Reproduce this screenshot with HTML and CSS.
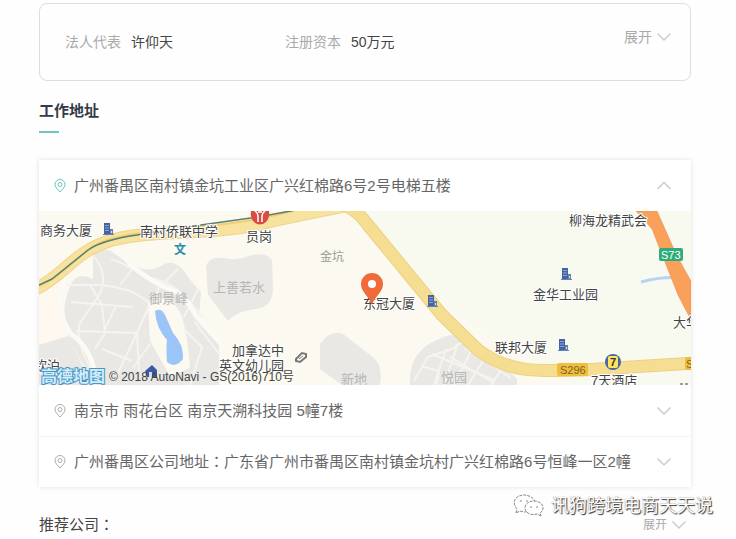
FILE: index.html
```html
<!DOCTYPE html>
<html lang="zh-CN">
<head>
<meta charset="utf-8">
<meta name="viewport" content="width=device-width, initial-scale=1">
<title>工作地址</title>
<link rel="stylesheet" href="styles.css">
</head>
<body>
<svg class="defs" aria-hidden="true">
  <symbol id="down" viewBox="0 0 16 10"><path d="M1.500 1.500 8 8l6.500-6.500" fill="none" stroke="currentColor" stroke-width="1.500"/></symbol>
  <symbol id="up" viewBox="0 0 16 10"><path d="M1.500 8 8 1.500 14.500 8" fill="none" stroke="currentColor" stroke-width="1.500"/></symbol>
  <symbol id="pin" viewBox="0 0 12 14"><path d="M6 13C3.500 10.300 1 8 1 5.500a5 5 0 0 1 10 0C11 8 8.500 10.300 6 13z" fill="none" stroke="currentColor"/><circle cx="6" cy="5.500" r="2" fill="none" stroke="currentColor"/></symbol>
  <symbol id="building" viewBox="0 0 11 12"><path d="M1 0h6v12H1z" fill="#4263a4"/><path d="M7 6h3v6H7zM0 11h11v1H0z" fill="#6480b5"/><path d="M2.500 2h1v1h-1zm2 0h1v1h-1zm-2 2.500h1v1h-1zm2 0h1v1h-1zM2.500 7h1v1h-1zm2 0h1v1h-1zM8 8h1v2H8z" fill="#dce6f6"/></symbol>
</svg>
<main class="page">
  <section class="company">
    <dl class="facts">
      <div class="fact"><dt>法人代表</dt><dd>许仰天</dd></div>
      <div class="fact"><dt>注册资本</dt><dd>50万元</dd></div>
    </dl>
    <button class="expand" type="button">展开<svg class="chevron"><use href="#down"/></svg></button>
  </section>

  <h2 class="title">工作地址</h2>

  <section class="addresses">
    <button class="address active" type="button"><svg class="pin"><use href="#pin"/></svg><span class="place">广州番禺区南村镇金坑工业区广兴红棉路6号2号电梯五楼</span><svg class="chevron"><use href="#up"/></svg></button>
    <svg class="map" viewBox="39 212 652 174" role="img" aria-label="地图">
      <rect x="39" y="212" width="652" height="174" fill="#fbf9f0"/>
      <path d="M350 212h341v174H575L450 310z" fill="#f8f9ef"/>
      <path d="M39 300l22-9 8 48-30 8z" fill="#fff8f0"/>
      <!-- districts -->
      <g fill="#e9e8e5">
        <path d="M93 258q4-12 18-6 12 10 24 15 14 7 26 0 12-8 22 4 8 12 18 22l-2 25 20 22v46H95l-24-42q-12-30-2-54 6-19 24-10z"/>
        <path d="M206 268q2-11 18-9 14 3 25-2 17-5 23 4l1 30q-1 18-18 19-18 2-27 12l-20-26z"/>
        <path d="M39 346l29-9 24 49H39z"/>
        <path d="M320 345q14-18 27-7l28 22q8 9 5 26h-38l-22-16z"/>
        <path d="M410 386q-2-34 29-46 20-9 34-2l44 42v6z"/>
      </g>
      <path d="M148 305q20-16 34 12 6 22 8 52l-20 8-20-35z" fill="#fbf9f0"/>
      <g fill="none" stroke="#f5f4ee" stroke-width="2">
        <path d="M66 286l36 0q34 4 48 19l-13 29 2 38M71 303l62 5M76 332l61 2-20 42M94 258q16 18 4 40l-18 26q-6 18 15 54M111 260q22 8 34 18 26 4 40 20l18 20M134 268l-14 18M178 270l-20 20-2 12M184 330l18 18-12 38M198 290l-14 28M194 322l26 34M90 286l12 20 3 28-10 16M102 350l30 12M116 307l-13 27M150 345l-17 24"/>
        <path d="M414 382l14-24 24-8q14-10 19-12M421 367l18 5-2 14M432 355l62 26M446 350l-12 36M458 344l-14 42M474 346l-20 40M486 357l-18 29M503 368l-12 18M450 358l44 26M465 349l46 30"/>
      </g>
      <path d="M69 272q-18 36 2 63 22 15 25 48M118 248q12 24 49 41 18 6 29 28l28 31" fill="none" stroke="#fbfaf5" stroke-width="5"/>
      <path d="M155 312q6-4 10 4l8 18q11 12 10 26-8 10-16 3-1-16 0-22-11-12-12-29z" fill="#9bc4f8"/>
      <path d="M641 283q26-7 48-3" fill="none" stroke="#b6d5f5" stroke-width="3"/>
      <g fill="none" stroke-linejoin="round">
        <path id="west" d="M34 291c30-14 40-39 78-50 48-12 103-3 160-19q36-8 72-15" stroke="#efd58a" stroke-width="13"/>
        <path d="M34 291c30-14 40-39 78-50 48-12 103-3 160-19q36-8 72-15" stroke="#f7e2a0" stroke-width="11"/>
        <path d="M344 206q13 5 24 20l74 90 36 35c32 24 62 21 105 20l112-7" stroke="#ecd184" stroke-width="13"/>
        <path d="M344 206q13 5 24 20l74 90 36 35c32 24 62 21 105 20l112-7" stroke="#f5dd92" stroke-width="11"/>
        <path d="M39 287c23-9 36-28 58-42 34-18 119-11 199-34" stroke="#f3cf72" stroke-width="2"/>
        <path d="M39 286l13-6 36-29q14-10 49-15l64-10 57-8 38-7" stroke="#557f70" stroke-width="1.500"/>
      </g>
      <path d="M636 212h21l20 45 14 25v39l-13-25-26-66z" fill="#f9a05b" stroke="#e98a49" stroke-width=".5"/>
      <!-- route badges -->
      <rect x="659" y="249" width="24" height="13" rx="2" fill="#2fac7c"/>
      <rect x="557" y="364" width="31" height="13" rx="2" fill="#f1bd3f"/>
      <rect x="685" y="358" width="10" height="13" rx="2" fill="#f1bd3f"/>
      <g class="route"><text class="expressway" x="661" y="260">S73</text><text x="560" y="375">S296</text><text x="686" y="369">S</text></g>
      <!-- places -->
      <g class="area"><text x="320" y="262">金坑</text><text x="149" y="304" class="faint">御景峰</text><text x="213" y="293" class="faint">上善若水</text><text x="341" y="385" class="faint">新地</text><text x="441" y="383" class="faint">悦园</text></g>
      <g class="label"><text x="40" y="236">商务大厦</text><text x="140" y="237">南村侨联中学</text><text x="246" y="242">员岗</text><text x="569" y="226">柳海龙精武会</text><text x="533" y="300">金华工业园</text><text x="363" y="309">东冠大厦</text><text x="495" y="353">联邦大厦</text><text x="232" y="356">加拿达中</text><text x="219" y="371">英文幼儿园</text><text x="673" y="328">大华</text><text x="34" y="371">钦泊</text><text x="591" y="386">7天酒店</text></g>
      <path d="M680 385h3m2 0h3" stroke="#444"/>
      <use href="#building" x="103" y="224" width="11" height="12"/>
      <use href="#building" x="561" y="269" width="11" height="12"/>
      <use href="#building" x="427" y="296" width="11" height="12"/>
      <use href="#building" x="558" y="340" width="11" height="12"/>
      <text class="school" x="174" y="255">文</text>
      <path d="M251 212h18q1 7-3 11-6 5-12 0-4-4-3-11z" fill="#d94c46"/><path d="M255 212q3 2 3 5v6m7-11q-3 2-3 5v6M258 213h4" fill="none" stroke="#fff" stroke-width="1.500"/>
      <path d="M296 360l6-6 4 1v3l-6 5-4-1z" fill="#fff" stroke="#777" stroke-width="2"/><path d="M299 360l4-3" stroke="#777"/>
      <path d="M145 372l7-6 5 5v7h-10z" fill="#3e58a3"/><path d="M149 373h3v5h-3z" fill="#cfdcf5"/>
      <circle cx="613" cy="363" r="8" fill="#4967a5"/><rect x="608" y="357" width="10" height="12" rx="2" fill="#ffe45b"/><text class="seven" x="610" y="367">7</text>
      <path d="M372 306c-3-9-11-13-11-21a11 11 0 0 1 22 0c0 8-8 12-11 21z" fill="#f06a3a"/><circle cx="372" cy="285" r="4" fill="#fff"/>
      <text class="brand" x="41" y="383">高德地图</text>
      <text class="credit" x="109" y="382">© 2018 AutoNavi - GS(2016)710号</text>
    </svg>
    <button class="address" type="button"><svg class="pin"><use href="#pin"/></svg><span class="place">南京市 雨花台区 南京天溯科技园 5幢7楼</span><svg class="chevron"><use href="#down"/></svg></button>
    <button class="address" type="button"><svg class="pin"><use href="#pin"/></svg><span class="place">广州番禺区公司地址<span class="colon" lang="zh-TW">：</span>广东省广州市番禺区南村镇金坑村广兴红棉路6号恒峰一区2幢</span><svg class="chevron"><use href="#down"/></svg></button>
  </section>

  <footer class="recommend">
    <span>推荐公司<span class="colon" lang="zh-TW">：</span></span>
    <button class="expand small" type="button">展开<svg class="chevron"><use href="#down"/></svg></button>
    <div class="watermark">
      <svg class="chat" viewBox="0 0 32 24" fill="#fff" stroke="#888" stroke-dasharray="3 1"><path d="M3 19l1-4C-3 6 5 1 11 1s11 4 11 8-5 9-11 9l-4-1z"/><path d="M28 22l-4-2c-7 2-12-2-12-6s4-7 9-7 9 3 9 7q0 3-3 5z"/><path d="M8 6v2m6-2v2m4 4v2m6-2v2" stroke-dasharray="none"/></svg>
      <span>讯狗跨境电商天天说</span>
    </div>
  </footer>
</main>
</body>
</html>
```
FILE: styles.css
```css
* { box-sizing: border-box; }
body {
  margin: 0;
  background: #fefefe;
  color: #444;
  font-family: "Liberation Sans", "Noto Sans CJK SC", sans-serif;
  font-size: 15px;
  line-height: 22px;
}
button {
  border: 0;
  padding: 0;
  background: none;
  color: inherit;
  font: inherit;
  cursor: pointer;
}
.defs { display: block; width: 0; height: 0; }
.page { padding: 3px 45px 0 39px; }
.company {
  display: flex;
  align-items: flex-start;
  justify-content: space-between;
  padding: 27px 18px 27px 25px;
  border: 1px solid #ddd;
  border-radius: 8px;
  font-size: 14px;
}
.facts { display: flex; flex: 1; margin: 0; }
.fact { display: flex; gap: 10px; width: 220px; }
.fact dt { color: #aaa; }
.fact dd { margin: 0; }
.expand { display: flex; align-items: center; gap: 4px; margin-top: -5px; color: #aaa; }
.chevron { flex: none; width: 16px; height: 10px; color: #ccc; }
.title {
  margin: 19px 0 27px;
  font-size: 15px;
  font-weight: 700;
  color: #333b48;
}
.title::after { content: ""; display: block; width: 20px; height: 2px; margin-top: 9px; background: #6cc5c1; }
.addresses { background: #fff; box-shadow: 0 0 5px rgba(0, 0, 0, 0.12); }
.address {
  display: flex;
  align-items: center;
  width: 100%;
  min-height: 51px;
  padding: 0 19px 0 15px;
  color: #666;
  text-align: left;
}
.address + .address { border-top: 1px solid #f2f2f2; }
.pin { flex: none; width: 12px; height: 14px; margin-right: 8px; color: #aaa; }
.active .pin { color: #63c5bd; }
.place { flex: 1; }
.colon { font-family: "Noto Sans CJK TC", sans-serif; line-height: 1; }
.map { display: block; width: 100%; }
.label { font-size: 13px; fill: #444; stroke: #fff; stroke-width: 2px; paint-order: stroke; }
.area { font-size: 12px; fill: #999; }
.faint { font-size: 13px; fill: #b5b5b5; }
.route { font-size: 11px; fill: #7a6420; }
.expressway { fill: #fff; }
.school { font-size: 12px; font-weight: 700; fill: #258eae; }
.seven { font-size: 11px; font-weight: 700; fill: #333; }
.brand { font-size: 16px; font-weight: 700; fill: #d5ecfa; stroke: #4797c6; stroke-width: 2px; paint-order: stroke; }
.credit { font-size: 12px; fill: #444; }
.recommend {
  position: relative;
  display: flex;
  align-items: center;
  justify-content: space-between;
  margin-top: 27px;
}
.small { margin: 0 4px 0 0; font-size: 12px; }
.watermark {
  position: absolute;
  right: -22px;
  bottom: 17px;
  display: flex;
  align-items: center;
  gap: 6px;
  color: #fff;
  font-size: 18px;
  line-height: 26px;
  white-space: nowrap;
  text-shadow: 1px 1px 1px #333, 0 0 1px #777;
}
.chat { width: 32px; height: 24px; }
```
